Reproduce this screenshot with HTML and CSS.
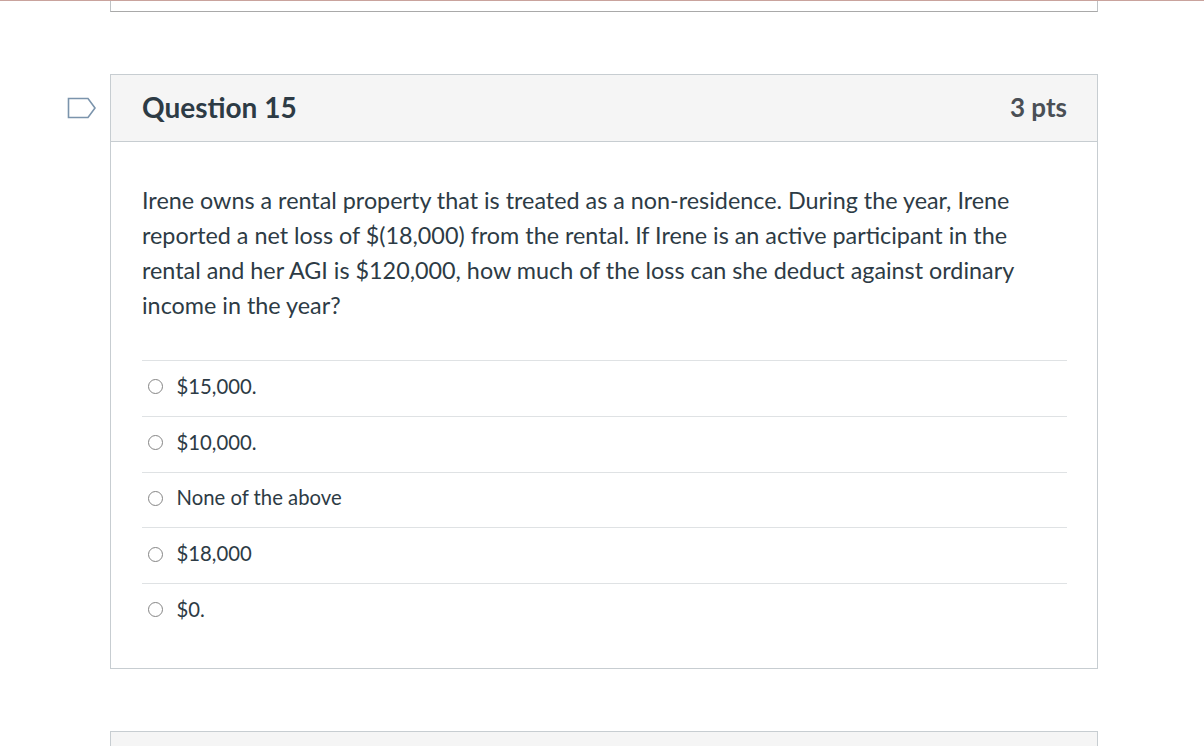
FILE: index.html
```html
<!DOCTYPE html>
<html lang="en">
<head>
<meta charset="utf-8">
<title>Question 15</title>
<link rel="stylesheet" href="styles.css">
</head>
<body>
<div class="topline"></div>
<div class="page">
  <div class="prev-box"></div>

  <div class="question">
    <svg class="flag" width="30" height="22" viewBox="0 0 30 22" aria-hidden="true">
      <path d="M1.5 1.5 H21 L28 11 L21 20.5 H1.5 Z" fill="#fff" stroke="#7b94ac" stroke-width="1.6" stroke-linejoin="miter"/>
    </svg>
    <div class="q-header">
      <h2 class="q-title">Question 15</h2>
      <span class="q-pts">3 pts</span>
    </div>
    <div class="q-body">
      <p class="q-text">Irene owns a rental property that is treated as a non-residence. During the year, Irene reported a net loss of $(18,000) from the rental. If Irene is an active participant in the rental and her AGI is $120,000, how much of the loss can she deduct against ordinary income in the year?</p>
      <ul class="answers">
        <li class="answer"><span class="radio"></span><span class="a-label">$15,000.</span></li>
        <li class="answer"><span class="radio"></span><span class="a-label">$10,000.</span></li>
        <li class="answer"><span class="radio"></span><span class="a-label">None of the above</span></li>
        <li class="answer"><span class="radio"></span><span class="a-label">$18,000</span></li>
        <li class="answer"><span class="radio"></span><span class="a-label">$0.</span></li>
      </ul>
    </div>
  </div>

  <div class="next-box"><div class="next-header"></div></div>
</div>
</body>
</html>
```

FILE: styles.css
```css
html, body {
  margin: 0;
  padding: 0;
  background: #fff;
  overflow: hidden;
}
body {
  font-family: Lato, "Noto Sans", "Liberation Sans", sans-serif;
  color: #2d3b45;
  height: 746px;
}
.topline {
  height: 1px;
  background: #c9a39d;
}
.page {
  width: 988px;
  margin-left: 110px;
}
.prev-box {
  height: 10px;
  border: 1px solid #bfc3c6;
  border-top: none;
  border-bottom-color: #a9a9a9;
}
.question {
  position: relative;
  margin-top: 62px;
  border: 1px solid #c7cdd1;
  background: #fff;
}
.flag {
  position: absolute;
  left: -44px;
  top: 22px;
}
.q-header {
  display: flex;
  align-items: center;
  justify-content: space-between;
  height: 63px;
  padding: 0 30px 3px 31px;
  background: #f5f5f5;
  border-bottom: 1px solid #c7cdd1;
}
.q-title {
  margin: 0;
  font-size: 28px;
  font-weight: 700;
  color: #2d3b45;
}
.q-pts {
  font-size: 26px;
  font-weight: 700;
  color: #4a4f55;
}
.q-body {
  padding: 41px 30px 29px 31px;
}
.q-text {
  margin: 0 0 37px;
  font-size: 23.35px;
  line-height: 35px;
  color: #2d3b45;
}
.answers {
  list-style: none;
  margin: 0;
  padding: 0;
}
.answer {
  display: flex;
  align-items: center;
  box-sizing: border-box;
  height: 55.75px;
  padding-bottom: 5px;
  border-top: 1px solid #dfe2e4;
  font-size: 20.3px;
  color: #2d3b45;
}
.radio {
  width: 13px;
  height: 13px;
  border: 1.5px solid #858585;
  border-radius: 50%;
  margin-left: 5.5px;
  margin-right: 14px;
  box-sizing: content-box;
  flex: none;
  position: relative;
  top: 1px;
}
.next-box {
  margin-top: 62px;
  border: 1px solid #c7cdd1;
  border-bottom: none;
  height: 40px;
}
.next-header {
  height: 100%;
  background: #f5f5f5;
}
```
